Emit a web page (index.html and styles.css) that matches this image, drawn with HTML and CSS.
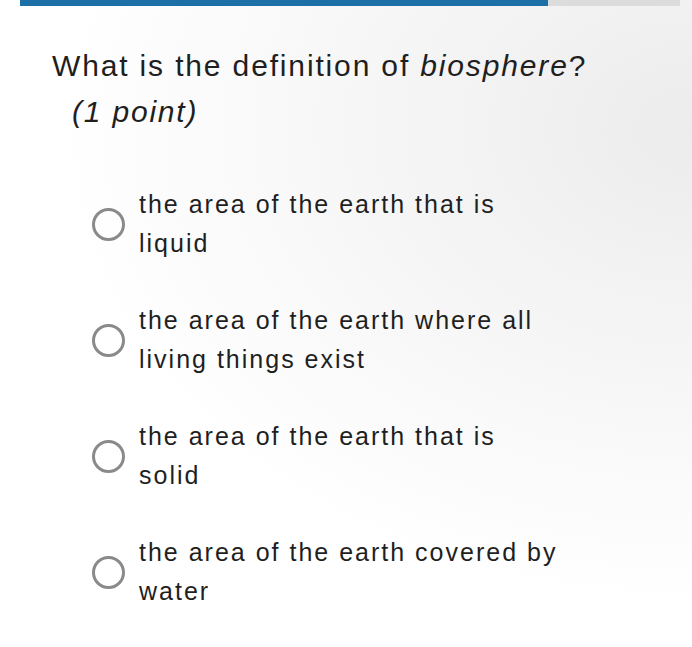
FILE: index.html
```html
<!DOCTYPE html>
<html>
<head>
<meta charset="utf-8">
<link rel="stylesheet" href="styles.css">
</head>
<body>
<div class="page">
  <div class="progress"><div class="progress-fill"></div></div>
  <div class="question">
    <div class="q-title">What is the definition of <em>biosphere</em>?</div>
    <div class="q-points">(1 point)</div>
  </div>
  <ul class="options">
    <li class="option"><span class="radio"></span><span class="opt-text">the area of the earth that is<br>liquid</span></li>
    <li class="option"><span class="radio"></span><span class="opt-text">the area of the earth where all<br>living things exist</span></li>
    <li class="option"><span class="radio"></span><span class="opt-text">the area of the earth that is<br>solid</span></li>
    <li class="option"><span class="radio"></span><span class="opt-text">the area of the earth covered by<br>water</span></li>
  </ul>
</div>
</body>
</html>
```
FILE: styles.css
```css
html, body {
  margin: 0;
  padding: 0;
}
body {
  width: 692px;
  height: 647px;
  overflow: hidden;
  font-family: "Liberation Sans", Arial, sans-serif;
  color: #1f1f1f;
  background: radial-gradient(ellipse at 100% 20%, #ececec 0%, #f5f5f5 30%, #ffffff 65%);
}
.page {
  padding: 0 12px 0 20px;
}
.progress {
  width: 660px;
  height: 6px;
  background: #dcdcdc;
  display: flex;
}
.progress-fill {
  width: 528px;
  background: #1d6fa8;
}
.question {
  padding: 37px 0 0 32px;
}
.q-title {
  font-size: 30px;
  line-height: 46px;
  letter-spacing: 1.85px;
}
.q-points {
  font-size: 30px;
  line-height: 46px;
  letter-spacing: 1.8px;
  font-style: italic;
  padding-left: 20px;
}
.options {
  list-style: none;
  margin: 0;
  padding: 50px 0 0 72px;
  display: flex;
  flex-direction: column;
  gap: 38px;
}
.option {
  display: flex;
  align-items: center;
  gap: 14px;
}
.radio {
  width: 27px;
  height: 27px;
  border: 3px solid #8a8a8a;
  border-radius: 50%;
  flex: none;
}
.opt-text {
  font-size: 25px;
  line-height: 39px;
  letter-spacing: 2px;
}
```
